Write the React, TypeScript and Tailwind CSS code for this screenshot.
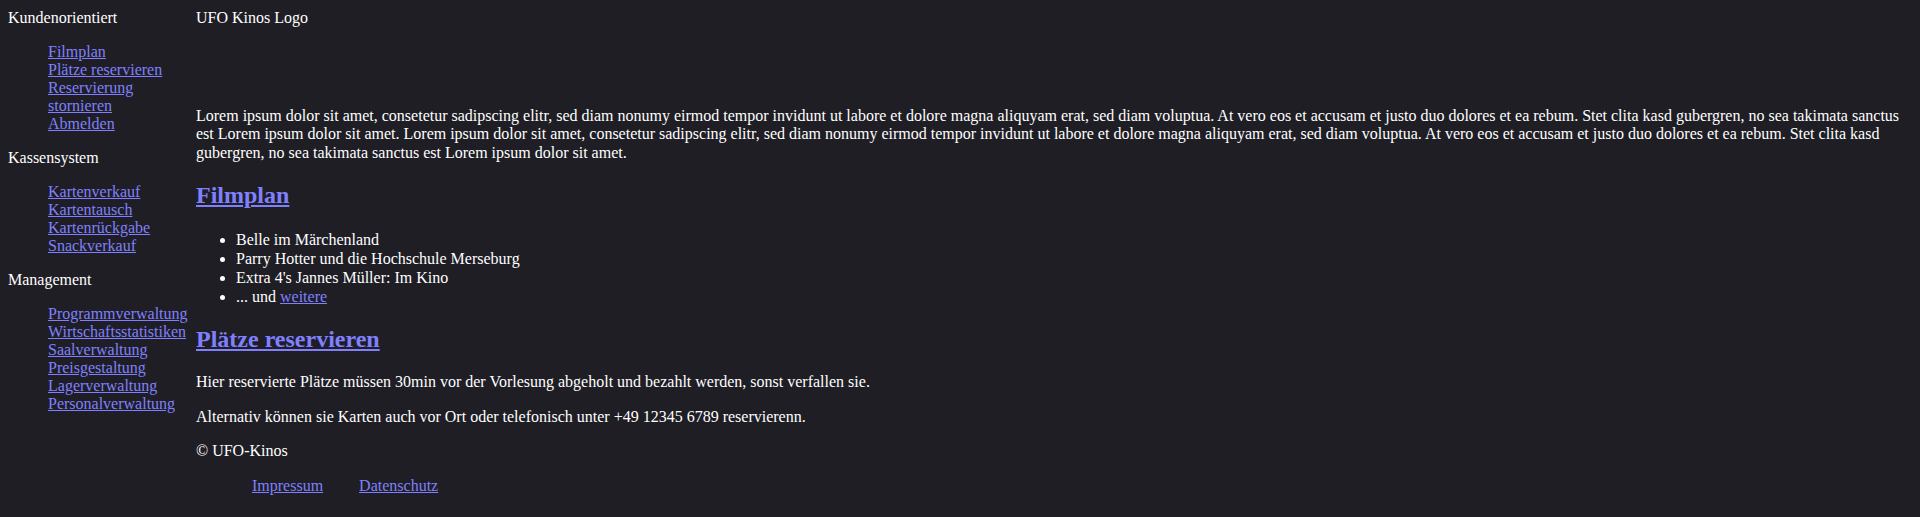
import React from "react";

interface NavGroup {
  title: string;
  links: string[];
}

const navGroups: NavGroup[] = [
  {
    title: "Kundenorientiert",
    links: ["Filmplan", "Plätze reservieren", "Reservierung stornieren", "Abmelden"],
  },
  {
    title: "Kassensystem",
    links: ["Kartenverkauf", "Kartentausch", "Kartenrückgabe", "Snackverkauf"],
  },
  {
    title: "Management",
    links: [
      "Programmverwaltung",
      "Wirtschaftsstatistiken",
      "Saalverwaltung",
      "Preisgestaltung",
      "Lagerverwaltung",
      "Personalverwaltung",
    ],
  },
];

const films = [
  "Belle im Märchenland",
  "Parry Hotter und die Hochschule Merseburg",
  "Extra 4's Jannes Müller: Im Kino",
];

const lorem =
  "Lorem ipsum dolor sit amet, consetetur sadipscing elitr, sed diam nonumy eirmod tempor invidunt ut labore et dolore magna aliquyam erat, sed diam voluptua. At vero eos et accusam et justo duo dolores et ea rebum. Stet clita kasd gubergren, no sea takimata sanctus est Lorem ipsum dolor sit amet. Lorem ipsum dolor sit amet, consetetur sadipscing elitr, sed diam nonumy eirmod tempor invidunt ut labore et dolore magna aliquyam erat, sed diam voluptua. At vero eos et accusam et justo duo dolores et ea rebum. Stet clita kasd gubergren, no sea takimata sanctus est Lorem ipsum dolor sit amet.";

const linkCls = "text-[#8080ff] underline";

const Sidebar: React.FC = () => {
  return (
    <nav className="w-[188px] shrink-0 leading-[18px]">
      {navGroups.map((group, i) => (
        <div key={group.title} className={i === 0 ? "" : "mt-4"}>
          <p>{group.title}</p>
          <ul className="mt-4 pl-10">
            {group.links.map((link) => (
              <li key={link}>
                <a href="#" className={linkCls}>
                  {link}
                </a>
              </li>
            ))}
          </ul>
        </div>
      ))}
    </nav>
  );
};

const App: React.FC = () => {
  return (
    <div
      className="min-h-[517px] bg-[#1e1e24] px-2 pt-[9px] pb-2 text-[16px] leading-[1.15] text-white"
      style={{ fontFamily: '"Liberation Serif", "Times New Roman", serif' }}
    >
      <div className="flex">
        <Sidebar />
        <main className="min-w-0 flex-1">
          {/* logo placeholder (alt text only) */}
          <header className="h-[82px]">UFO Kinos Logo</header>

          <p className="mt-4">{lorem}</p>

          <h2 className="mt-5 text-[24px] font-bold">
            <a href="#" className={linkCls}>
              Filmplan
            </a>
          </h2>
          <ul className="mt-5 list-disc pl-10 leading-[19px]">
            {films.map((film) => (
              <li key={film}>{film}</li>
            ))}
            <li>
              ... und{" "}
              <a href="#" className={linkCls}>
                weitere
              </a>
            </li>
          </ul>

          <h2 className="mt-5 text-[24px] font-bold">
            <a href="#" className={linkCls}>
              Plätze reservieren
            </a>
          </h2>
          <p className="mt-5">
            Hier reservierte Plätze müssen 30min vor der Vorlesung abgeholt und bezahlt werden, sonst verfallen sie.
          </p>
          <p className="mt-4">
            Alternativ können sie Karten auch vor Ort oder telefonisch unter +49 12345 6789 reservierenn.
          </p>

          <footer className="mt-4">
            <p>© UFO-Kinos</p>
            <ul className="mt-4 flex gap-9 pl-14">
              <li>
                <a href="#" className={linkCls}>
                  Impressum
                </a>
              </li>
              <li>
                <a href="#" className={linkCls}>
                  Datenschutz
                </a>
              </li>
            </ul>
          </footer>
        </main>
      </div>
    </div>
  );
};

export default App;
